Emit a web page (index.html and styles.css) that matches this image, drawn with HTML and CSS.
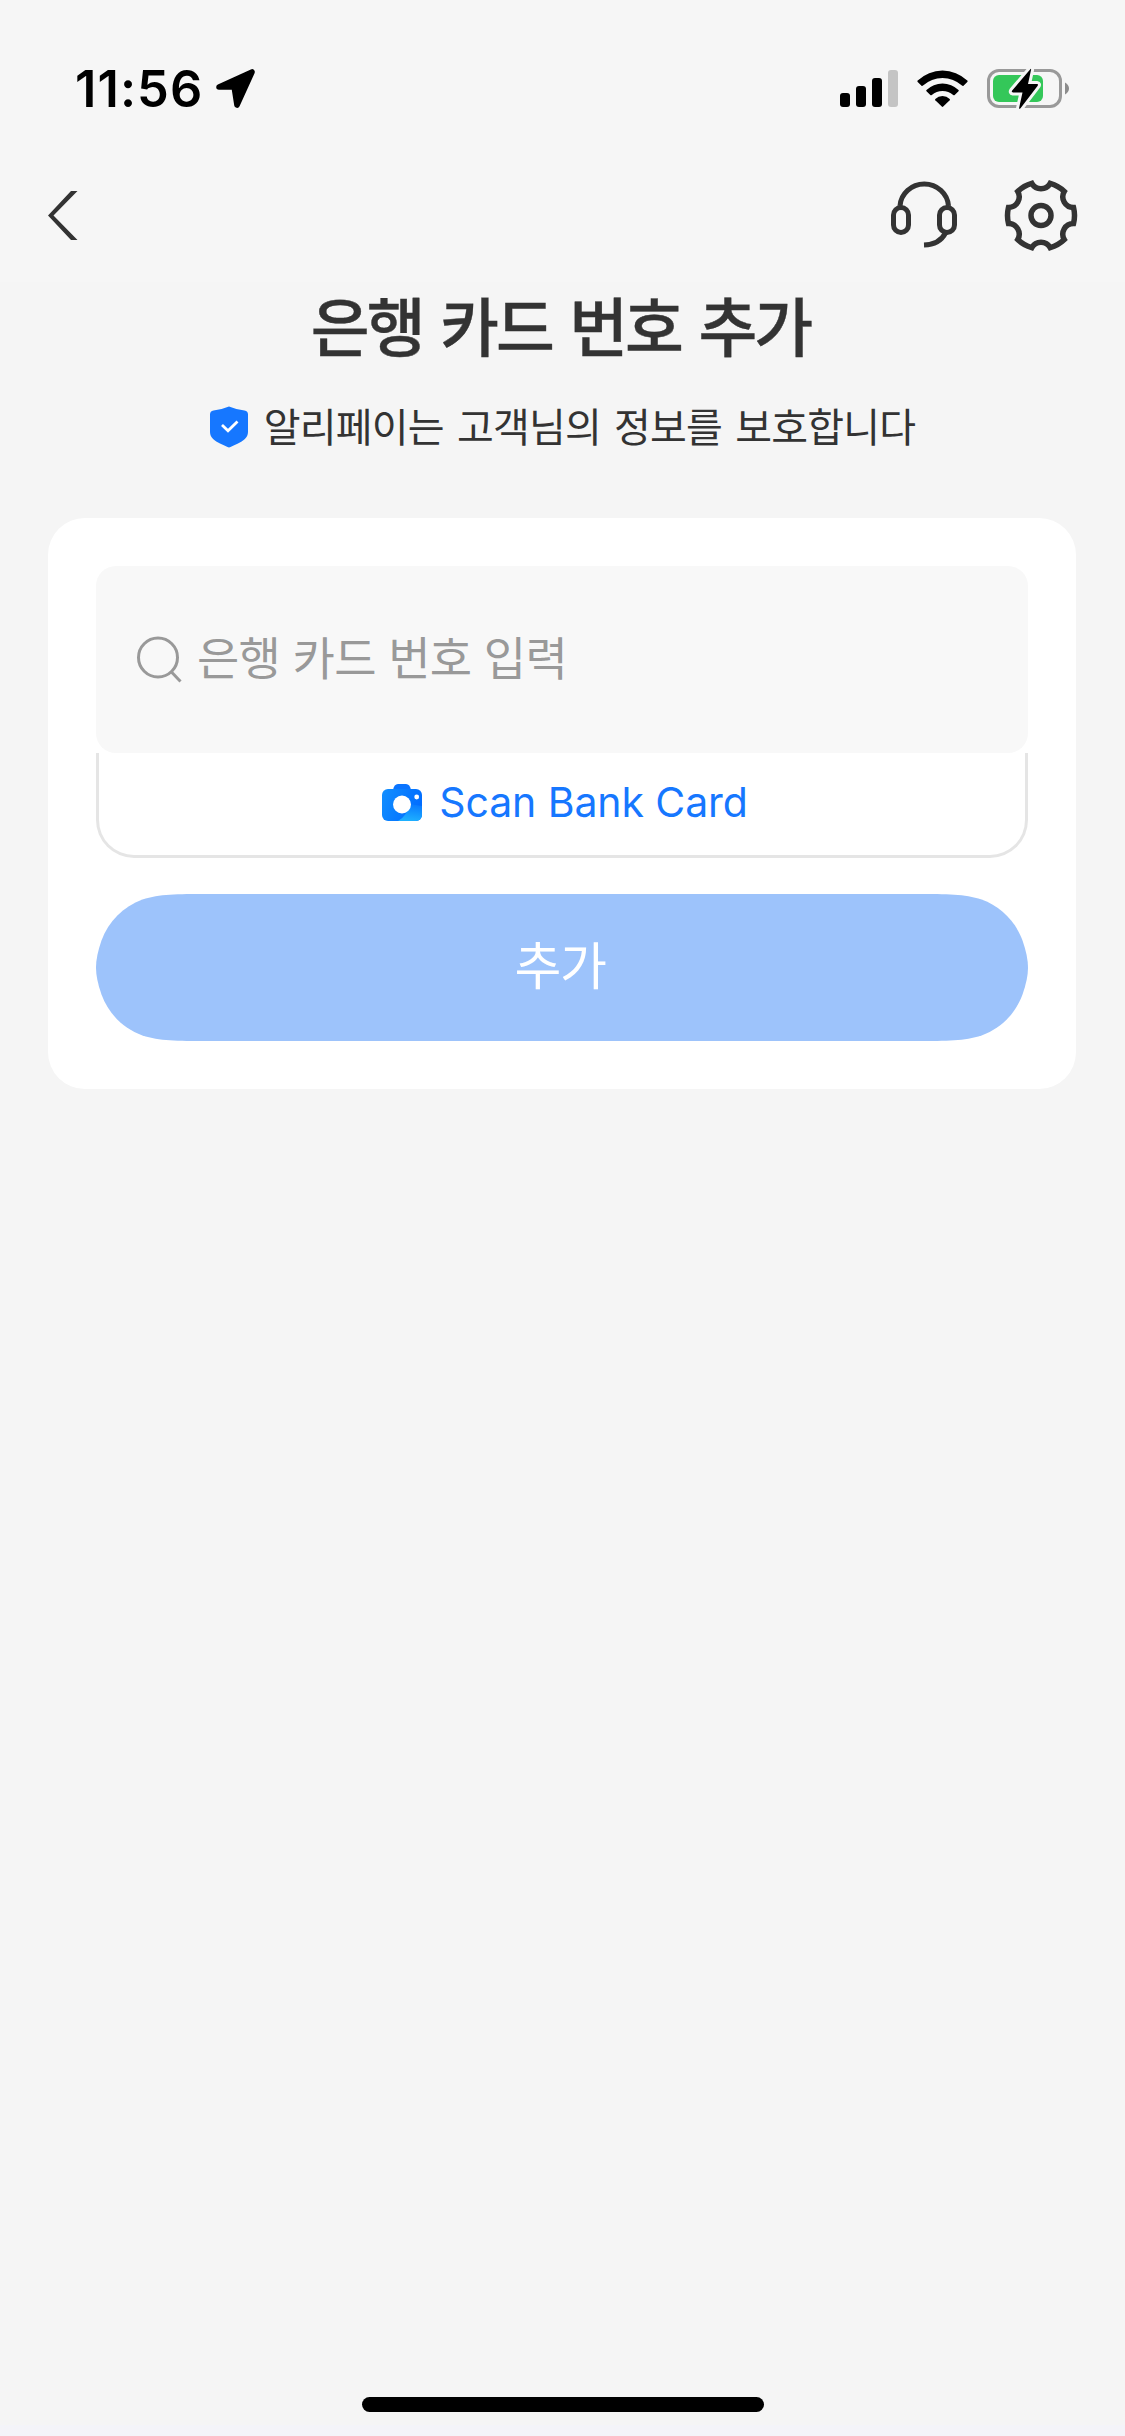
FILE: index.html
```
<!DOCTYPE html>
<html lang="ko">
<head>
<meta charset="utf-8">
<title>은행 카드 번호 추가</title>
<link rel="stylesheet" href="styles.css">
</head>
<body>
<div class="screen">
  <header class="top">
    <div class="status">
      <span class="time">11:56</span>
      <svg class="location" width="40" height="40" viewBox="0 0 40 40"><path d="M3 18 L36 3 L21 36 L18.5 20 Q18 18 16 18 Z" fill="#000" stroke="#000" stroke-width="5.6" stroke-linejoin="round"/></svg>
      <div class="indicators">
        <svg width="58" height="38" viewBox="0 0 58 38"><rect y="23" width="10" height="14" rx="3"/><rect x="16" y="16" width="10" height="21" rx="3"/><rect x="32" y="8" width="10" height="29" rx="3"/><rect x="48" width="10" height="37" rx="3" fill="#c4c4c4"/></svg>
        <svg width="52" height="38" viewBox="0 0 52 38"><path d="M.7 10.5Q0 11.2.7 11.9L4.5 15.700Q5.200 16.300 6 15.600A29 29 0 0 1 45 15.600Q45.800 16.300 46.500 15.700L50.300 11.900Q51 11.200 50.300 10.500A36 36 0 0 0 .7 10.500Z"/><path d="M9.500 20Q8.800 20.700 9.500 21.300L13.300 25Q14 25.600 14.800 25A16.500 16.500 0 0 1 36.200 25Q37 25.600 37.700 25L41.500 21.300Q42.200 20.700 41.500 20A23 23 0 0 0 9.500 20Z"/><path d="M18.300 28.900Q17.700 29.500 18.300 30.200L24.800 36.600Q25.500 37.200 26.200 36.600L32.700 30.200Q33.300 29.500 32.700 28.900A10.500 10.500 0 0 0 18.300 28.900Z"/></svg>
        <svg width="83" height="42" viewBox="0 0 83 42"><rect x="1.500" y="2.500" width="72" height="36" rx="10.500" fill="none" stroke="#999" stroke-width="3"/><path d="M78 14.500Q82 17 82 20.500Q82 24 78 26.500Z" fill="#8c8c8c"/><rect x="6" y="7" width="50" height="27" rx="6" fill="#34c759"/><path d="M43.300 1.200Q44.400-.2 44 2L41 16H50Q51.800 16.200 50.500 18L33.500 40.200Q31.700 41.800 32.200 39.500L35.500 24.500H26Q24 24.200 25.200 22.500Z" stroke="#f6f6f6" stroke-width="6" paint-order="stroke" stroke-linejoin="round"/></svg>
      </div>
    </div>
    <nav class="nav">
      <svg width="31" height="50" viewBox="0 0 31 50"><path d="M24 0H30.500L6.500 24.500L30.500 49H24L1 24.500Z" fill="#333"/></svg>
      <div class="actions">
        <svg width="66" height="70" viewBox="0 0 66 70" fill="none" stroke="#333" stroke-width="5"><rect x="2.500" y="26.500" width="15" height="25" rx="7.500"/><rect x="48.500" y="26.500" width="15" height="25" rx="7.500"/><path d="M9 25A24.300 23.500 0 0 1 57.500 25"/><path d="M54.500 52Q48.500 63.500 33 64"/></svg>
        <svg width="74" height="74" viewBox="-37 -36.500 74 74" fill="none" stroke="#333" stroke-width="5.500"><circle r="10"/><path d="M32.500-8.100A33.500 33.500 0 0 1 32.500 8.100A10.600 10.600 0 0 0 23.300 24.100A33.500 33.500 0 0 1 9.200 32.200A10.600 10.600 0 0 0-9.200 32.200A33.500 33.500 0 0 1-23.300 24.100A10.600 10.600 0 0 0-32.500 8.100A33.500 33.500 0 0 1-32.500-8.100A10.600 10.600 0 0 0-23.300-24.100A33.500 33.500 0 0 1-9.200-32.200A10.600 10.600 0 0 0 9.200-32.200A33.500 33.500 0 0 1 23.300-24.100A10.600 10.600 0 0 0 32.500-8.100Z"/></svg>
      </div>
    </nav>
  </header>
  <main class="main">
    <h1 class="title">은행 카드 번호 추가</h1>
    <p class="notice">
      <svg width="38" height="42" viewBox="0 0 38 42"><path d="M19 .5Q26 3.500 34.500 4.500Q38 5 38 8.500V26C38 32 33 35 28 37.500Q23 39.500 20.500 41Q19 41.800 17.500 41Q15 39.500 10 37.500C5 35 0 32 0 26V8.500Q0 5 3.500 4.500Q12 3.500 19 .5Z" fill="#1677ff"/><path d="M12 19L18 24.700L27.500 15.500" fill="none" stroke="#fff" stroke-width="2.800"/></svg>
      <span class="notice-text">알리페이는 고객님의 정보를 보호합니다</span>
    </p>
    <section class="card">
      <div class="field">
        <svg width="46" height="50" viewBox="0 0 46 50" fill="none" stroke="#999" stroke-width="3"><circle cx="22" cy="22.500" r="19.500"/><path d="M35 36.500L44.500 46.500"/></svg>
        <span class="placeholder">은행 카드 번호 입력</span>
      </div>
      <div class="scan">
        <svg width="40" height="37" viewBox="0 0 40 37"><defs><linearGradient id="body" x1="0" y1=".3" x2="1" y2=".6"><stop offset="0" stop-color="#108cff"/><stop offset="1" stop-color="#006bff"/></linearGradient><linearGradient id="glow" x1=".8" y1="0" x2=".6" y2="1"><stop offset="0" stop-color="#0878ff"/><stop offset="1" stop-color="#1eb0ff"/></linearGradient><clipPath id="shape"><rect y="5" width="40" height="32" rx="6"/></clipPath></defs><path d="M11 6Q12 0 16 0H24Q28 0 29 6Z" fill="#0a74ff"/><rect y="5" width="40" height="32" rx="6" fill="url(#body)"/><path d="M16 37Q26 31 27 20L40 22V37Z" fill="url(#glow)" clip-path="url(#shape)"/><circle cx="20" cy="20.500" r="9" fill="#fff"/><circle cx="34.700" cy="13" r="2.400" fill="#fff"/></svg>
        <span class="scan-text">Scan Bank Card</span>
      </div>
      <div class="submit"><span class="submit-text">추가</span></div>
    </section>
  </main>
  <footer class="home"><div class="bar"></div></footer>
</div>
</body>
</html>
```
FILE: styles.css
```
* { box-sizing: border-box; }
body {
  margin: 0;
  font-family: Inter, "Noto Sans CJK KR", sans-serif;
  color: #333;
}
svg { display: block; flex: none; }
.screen {
  width: 1125px;
  height: 2436px;
  display: flex;
  flex-direction: column;
  background: #f5f5f5;
}
.top { height: 282px; background: #f6f6f6; }
.status {
  height: 150px;
  padding: 66px 55px 0 75px;
  display: flex;
  align-items: flex-start;
}
.time {
  font-size: 50.5px;
  font-weight: 600;
  line-height: 46px;
  letter-spacing: 1.1px;
  color: #000;
  width: 141px;
  white-space: nowrap;
}
.location { margin-top: 3px; }
.indicators {
  margin-left: auto;
  display: flex;
  gap: 19px;
  padding-top: 4px;
}
.indicators svg:last-child { margin: -2px 0 0 -1px; }
.nav {
  height: 132px;
  padding: 0 47px;
  display: flex;
  align-items: center;
  justify-content: space-between;
}
.actions { display: flex; align-items: center; gap: 47px; }
.main { flex: 1; }
.title, .notice-text, .placeholder, .submit-text {
  font-family: "Noto Sans CJK KR", sans-serif;
  white-space: nowrap;
}
.title {
  margin: 0;
  height: 91px;
  padding-right: 4px;
  font-size: 64px;
  font-weight: 500;
  line-height: 82px;
  letter-spacing: -3px;
  word-spacing: 2.5px;
  text-align: center;
  -webkit-text-stroke: .4px #333;
}
.notice {
  margin: 24px 0 0;
  height: 60px;
  display: flex;
  align-items: center;
  justify-content: center;
  gap: 16px;
}
.notice-text {
  height: 60px;
  font-size: 40px;
  line-height: 57px;
  letter-spacing: -.8px;
  word-spacing: 2.7px;
}
.card {
  margin: 61px 49px 0 48px;
  padding: 48px;
  height: 571px;
  border-radius: 37px;
  background: #fff;
}
.field {
  height: 187px;
  padding-left: 40px;
  border-radius: 20px;
  background: #f8f8f8;
  display: flex;
  align-items: center;
  gap: 15px;
}
.placeholder {
  height: 60px;
  font-size: 46px;
  line-height: 51px;
  letter-spacing: -.8px;
  word-spacing: .5px;
  color: #999;
}
.scan {
  height: 105px;
  padding: 0 0 4px 6px;
  border: 3px solid #e5e5e5;
  border-top: 0;
  border-radius: 0 0 38px 38px;
  display: flex;
  align-items: center;
  justify-content: center;
  gap: 17px;
}
.scan-text {
  font-size: 41px;
  line-height: 50px;
  letter-spacing: -.1px;
  color: #1677ff;
  white-space: nowrap;
}
.submit {
  margin-top: 36px;
  height: 147px;
  background: #9dc3fb;
  display: flex;
  align-items: center;
  justify-content: center;
  /* pill with continuous-curvature ends */
  clip-path: path("M112 0H820C852 0 868 0 885.600 5.500C904.600 12.400 919.600 27.400 926.500 46.400Q932 62 932 73.500Q932 85 926.500 100.600C919.600 119.600 904.600 134.600 885.600 141.500C868 147 852 147 820 147H112C80 147 64 147 46.400 141.500C27.400 134.600 12.400 119.600 5.500 100.600Q0 85 0 73.500Q0 62 5.500 46.400C12.400 27.400 27.400 12.400 46.400 5.500C64 0 80 0 112 0Z");
}
.submit-text {
  height: 70px;
  font-size: 51px;
  line-height: 61px;
  letter-spacing: -1.5px;
  padding-right: 4px;
  color: #fff;
}
.home {
  height: 39px;
  background: linear-gradient(#f5f5f5 28px, #f4f4f9 28px);
}
.bar {
  width: 402px;
  height: 15px;
  margin: 0 auto;
  border-radius: 8px;
  background: #000;
}
```
